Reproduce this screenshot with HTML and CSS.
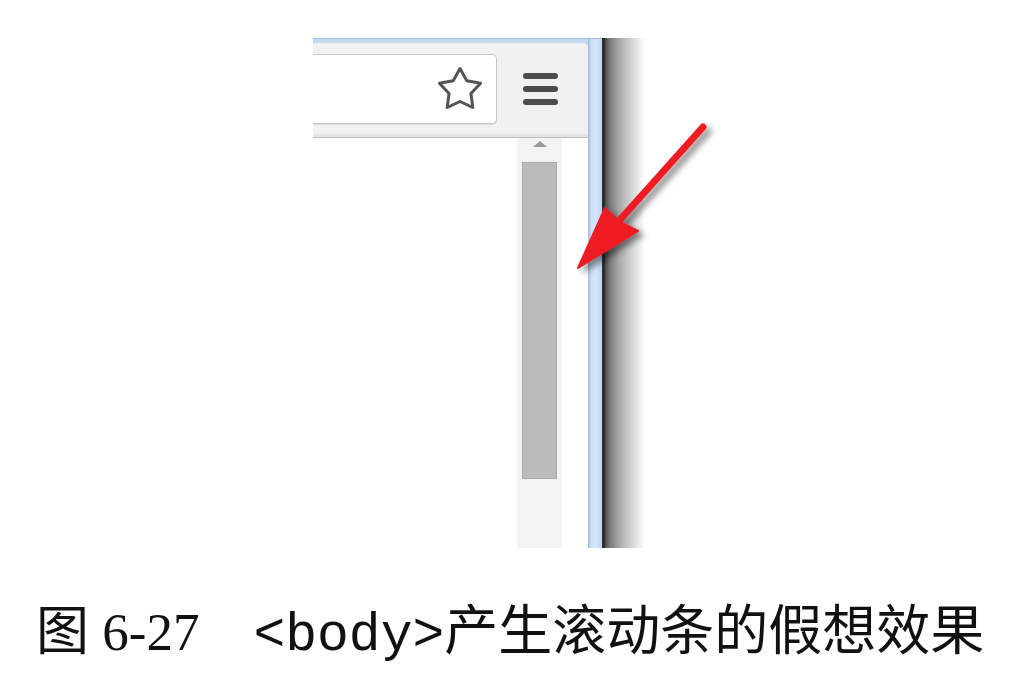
FILE: index.html
```html
<!DOCTYPE html>
<html lang="zh-CN">
<head>
<meta charset="utf-8">
<title>图 6-27</title>
<link rel="stylesheet" href="styles.css">
</head>
<body>
<div class="stage">
  <div class="shot">
    <div class="window">
      <div class="inner">
        <div class="toolbar">
          <div class="omnibox">
            <svg class="star" width="48" height="48" viewBox="0 0 48 48">
              <polygon points="24,3.5 30.76,15.7 44.6,18.3 34.94,28.55 36.8,42.5 24,36.5 11.2,42.5 13.06,28.55 3.4,18.3 17.24,15.7" fill="none" stroke="#555555" stroke-width="3" stroke-linejoin="round"/>
            </svg>
          </div>
          <div class="menu">
            <span class="bar"></span>
            <span class="bar"></span>
            <span class="bar"></span>
          </div>
        </div>
        <div class="content">
          <div class="page"></div>
          <div class="track">
            <div class="up"></div>
            <div class="thumb"></div>
          </div>
          <div class="margin"></div>
        </div>
      </div>
    </div>
    <div class="edge"></div>
    <div class="shadow"></div>
  </div>
  <svg class="arrow" width="170" height="180" viewBox="0 0 170 180">
    <defs>
      <filter id="sh" x="-30%" y="-30%" width="160%" height="160%">
        <feDropShadow dx="5" dy="4" stdDeviation="3" flood-color="#000" flood-opacity="0.45"/>
      </filter>
    </defs>
    <g filter="url(#sh)">
      <line x1="143" y1="17" x2="58" y2="112" stroke="#ee1c24" stroke-width="7" stroke-linecap="round"/>
      <polygon points="18,158 45,98 60,112 78,121" fill="#ee1c24" stroke="#ee1c24" stroke-width="2" stroke-linejoin="round"/>
    </g>
  </svg>
</div>
<p class="caption"><span class="no">图 6-27</span><span class="code">&lt;body&gt;</span><span class="title">产生滚动条的假想效果</span></p>
</body>
</html>
```
FILE: styles.css
```css
html, body {
  margin: 0;
  padding: 0;
  background: #ffffff;
}

.stage {
  position: relative;
  height: 548px;
}

.shot {
  display: flex;
  margin-left: 313px;
  padding-top: 38px;
  width: 332px;
  height: 510px;
}

.window {
  display: flex;
  width: 289px;
  padding-top: 4px;
  padding-right: 14px;
  box-sizing: border-box;
  background:
    linear-gradient(90deg, #a4bbd6 0, #cde1f7 25%, #d3e6fb 60%, #bcd3ee 100%) right top / 14px 100% no-repeat,
    #c4daf3;
  border-top: 1px solid #a3c0e2;
}

.inner {
  flex: 1;
  display: flex;
  flex-direction: column;
  min-width: 0;
}

.toolbar {
  height: 94px;
  display: flex;
  align-items: center;
  background: #f1f1f1;
  border-top-right-radius: 5px;
  border-bottom: 1px solid #bdbdbd;
  box-shadow: inset 0 -3px 0 #e4e4e4;
}

.omnibox {
  width: 184px;
  height: 70px;
  box-sizing: border-box;
  background: #ffffff;
  border: 1px solid #c6c6c6;
  border-left: none;
  border-radius: 0 5px 5px 0;
  box-shadow: 0 1px 0 #dcdcdc;
  display: flex;
  align-items: center;
  justify-content: flex-end;
  padding-right: 12px;
  margin-top: -2px;
}

.star {
  display: block;
}

.menu {
  margin-left: 26px;
  display: flex;
  flex-direction: column;
  gap: 7px;
  margin-top: -2px;
}

.bar {
  display: block;
  width: 35px;
  height: 6px;
  border-radius: 3px;
  background: #4c4c4c;
}

.content {
  flex: 1;
  display: flex;
  background: #ffffff;
}

.page {
  width: 204px;
}

.track {
  width: 45px;
  background: #f3f3f3;
  display: flex;
  flex-direction: column;
  align-items: center;
}

.up {
  width: 0;
  height: 0;
  margin-top: 3px;
  border-left: 7px solid transparent;
  border-right: 7px solid transparent;
  border-bottom: 6px solid #999999;
}

.thumb {
  margin-top: 15px;
  width: 33px;
  height: 315px;
  background: #bbbbbb;
  border: 1px solid #aaaaaa;
}

.margin {
  flex: 1;
}

.edge {
  width: 3px;
  background: #2e2e2e;
}

.shadow {
  width: 40px;
  background: linear-gradient(90deg, #4a4a4a 0, #7a7a7a 12%, #a8a8a8 35%, #d2d2d2 65%, #f2f2f2 90%, #ffffff 100%);
}

.arrow {
  position: absolute;
  left: 560px;
  top: 110px;
}

.caption {
  margin: 52px 0 0 0;
  padding-left: 36px;
  font-size: 53px;
  line-height: 1;
  color: #111111;
  white-space: pre;
  font-family: "Liberation Serif", "Noto Sans CJK SC", serif;
}

.code {
  margin-left: 54px;
  font-family: "Liberation Mono", monospace;
  font-weight: 300;
}

.title {
  font-family: "Noto Sans CJK SC", sans-serif;
  font-size: 54px;
}
```
